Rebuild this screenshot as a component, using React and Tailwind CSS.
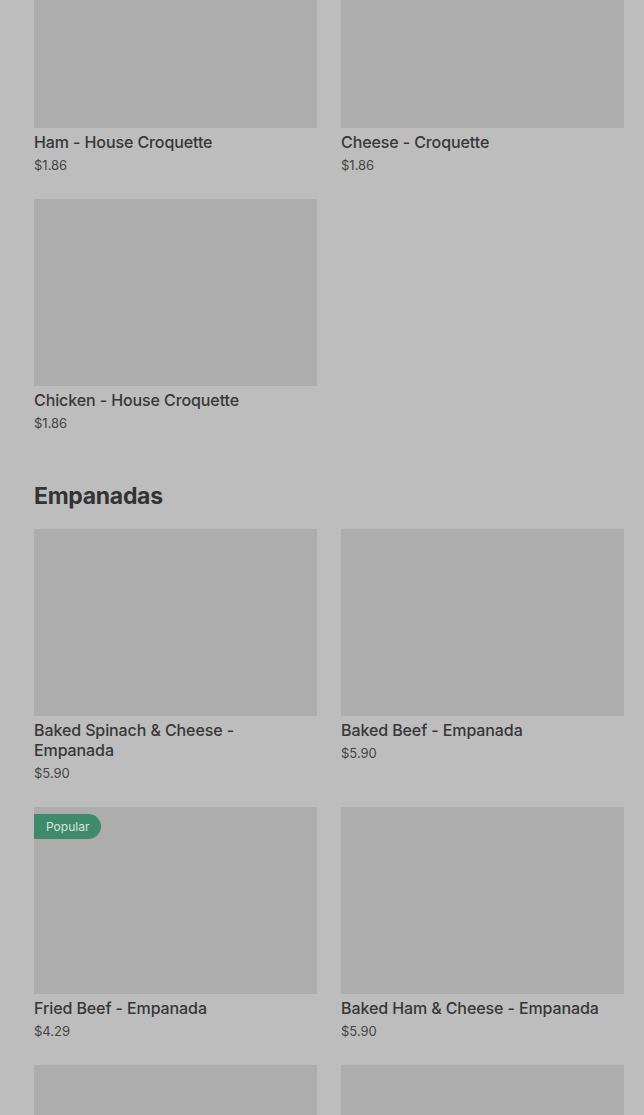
export default function App() {
  const Card = ({ title, price, popular }) => (
    <div className="flex flex-col">
      <div className="relative h-[187px] w-full bg-[#adadad]">
        {popular && (
          <div className="absolute left-0 top-[7px] flex h-[25px] items-center rounded-r-full bg-[#3f8a6a] pl-[12px] pr-[12px] text-[12px] text-[#d9e6df]">
            Popular
          </div>
        )}
      </div>
      <div className="mt-[4px] text-[16px] font-medium leading-[20px] tracking-[-0.1px] text-[#373737]">{title}</div>
      <div className="mt-[3px] text-[13px] leading-[20px] text-[#454545]">{price}</div>
    </div>
  );

  return (
    <div
      className="h-[1115px] w-[644px] overflow-hidden bg-[#bdbdbd]"
      style={{ fontFamily: 'Inter, "Noto Sans", sans-serif' }}
    >
      <div className="-mt-[59px] pl-[34px] pr-[20px]">
        <div className="grid grid-cols-2 gap-x-[24px] gap-y-[24px]">
          <Card title="Ham - House Croquette" price="$1.86" />
          <Card title="Cheese - Croquette" price="$1.86" />
          <Card title="Chicken - House Croquette" price="$1.86" />
        </div>
        <h2 className="mt-[49px] mb-[19px] text-[23px] font-bold leading-[28px] tracking-[-0.3px] text-[#333333]">
          Empanadas
        </h2>
        <div className="grid grid-cols-2 gap-x-[24px] gap-y-[24px]">
          <Card title="Baked Spinach & Cheese - Empanada" price="$5.90" />
          <Card title="Baked Beef - Empanada" price="$5.90" />
          <Card title="Fried Beef - Empanada" price="$4.29" popular />
          <Card title="Baked Ham & Cheese - Empanada" price="$5.90" />
          <Card title="" price="" />
          <Card title="" price="" />
        </div>
      </div>
    </div>
  );
}
